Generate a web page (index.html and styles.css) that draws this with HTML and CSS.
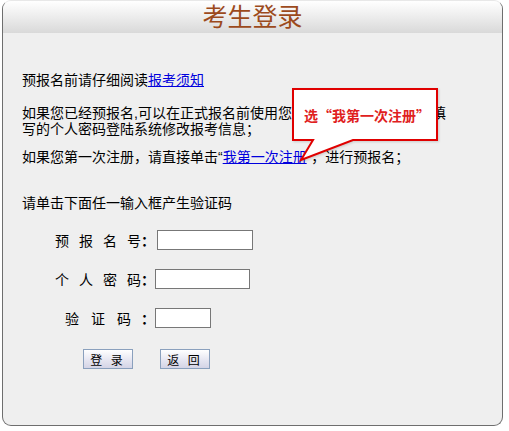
FILE: index.html
```html
<!DOCTYPE html>
<html lang="zh-CN">
  <head>
    <meta charset="UTF-8" />
    <title>考生登录</title>
    <link rel="stylesheet" href="styles.css">
  </head>

  <body>
    <div class="panel">
      <h1 class="panel-head">考生登录</h1>

      <div class="panel-body">
        <p class="note first">预报名前请仔细阅读<a href="#">报考须知</a></p>
        <p class="note second">如果您已经预报名,可以在正式报名前使用您的预报名号和报名时所填写的个人密码登陆系统修改报考信息；</p>
        <p class="note third">如果您第一次注册，请直接单击“<a href="#">我第一次注册</a>”，进行预报名；</p>
        <p class="note fourth">请单击下面任一输入框产生验证码</p>

        <form class="login-form">
          <div class="row row-no">
            <span class="lbl">预 报 名 号</span><span class="colon">：</span>
            <input type="text" class="ipt ipt-no">
          </div>
          <div class="row row-pwd">
            <span class="lbl">个 人 密 码</span><span class="colon">：</span>
            <input type="password" class="ipt ipt-pwd">
          </div>
          <div class="row row-code">
            <span class="lbl">验 证 码</span><span class="colon">：</span>
            <input type="text" class="ipt ipt-code">
          </div>
          <div class="buttons">
            <button type="button" class="btn">登 录</button>
            <button type="button" class="btn">返 回</button>
          </div>
        </form>
      </div>

      <!-- 提示气泡 -->
      <div class="callout">
        <svg class="callout-shape" width="150" height="76" viewBox="0 0 150 76">
          <path d="M2 2 H146 V53 H62 L10 73 L22 53 H2 Z" fill="#ffffff" stroke="#e00000" stroke-width="2" />
        </svg>
        <span class="callout-text">选“我第一次注册”</span>
      </div>
    </div>
  </body>
</html>
```

FILE: styles.css
```css
* {
  margin: 0;
  padding: 0;
  box-sizing: border-box;
}

body {
  background: #ffffff;
  color: #000000;
  font-family: "Liberation Sans", "Noto Sans CJK SC", sans-serif;
  font-size: 14px;
}

.panel {
  position: relative;
  width: 501px;
  height: 426px;
  margin-left: 2px;
  background: #efefef;
  border: 1px solid #6e6e6e;
  border-top-color: #e8e8e8;
  border-radius: 9px;
  overflow: hidden;
}

.panel-head {
  height: 32px;
  line-height: 32px;
  text-align: center;
  font-size: 25px;
  font-weight: normal;
  color: #9c4a1c;
  background: linear-gradient(#ffffff, #f0f0f0 40%, #d9d9d9);
}

.panel-body {
  padding: 39px 0 0 19px;
}

.note {
  width: 432px;
  line-height: 16px;
}

.note a {
  color: #0000dd;
  text-decoration: underline;
}

.second {
  margin-top: 17px;
}

.third {
  margin-top: 12px;
}

.fourth {
  margin-top: 30px;
}

.login-form {
  margin-top: 19px;
}

.row {
  display: flex;
  align-items: center;
  height: 20px;
  margin-bottom: 19px;
}

.row-code {
  margin-top: 4px;
}

.lbl {
  display: inline-block;
  width: 86px;
  margin-left: 33px;
  text-align: justify;
  text-align-last: justify;
  font-size: 14px;
}

.row-code .lbl {
  width: 66px;
  margin-left: 43px;
}

.row-code .colon {
  margin-left: 10px;
}

.colon {
  width: 16px;
  margin-left: 0;
  font-weight: bold;
}

.ipt {
  height: 20px;
  border: 1px solid #777777;
  background: #ffffff;
  outline: none;
}

.ipt-no {
  width: 96px;
}

.ipt-pwd {
  width: 95px;
  margin-left: -2px;
}

.ipt-code {
  width: 56px;
  margin-left: -2px;
}

.buttons {
  display: flex;
  gap: 27px;
  margin-top: 21px;
  padding-left: 61px;
}

.btn {
  width: 50px;
  height: 20px;
  border: 1px solid #8aa0bd;
  background: linear-gradient(#ffffff, #e4e4f0 60%, #d4d4e6);
  font-family: "Noto Sans CJK SC", sans-serif;
  font-size: 12px;
  letter-spacing: 3px;
  color: #000000;
  cursor: pointer;
}

.callout {
  position: absolute;
  left: 288px;
  top: 86px;
  width: 150px;
  height: 76px;
}

.callout-shape {
  display: block;
  filter: drop-shadow(1px 1px 1px rgba(0, 0, 0, 0.15));
}

.callout-text {
  position: absolute;
  left: 13px;
  top: 19px;
  line-height: 18px;
  font-family: "Noto Sans CJK SC", sans-serif;
  font-size: 14px;
  font-weight: bold;
  color: #e02020;
  white-space: nowrap;
}
```
